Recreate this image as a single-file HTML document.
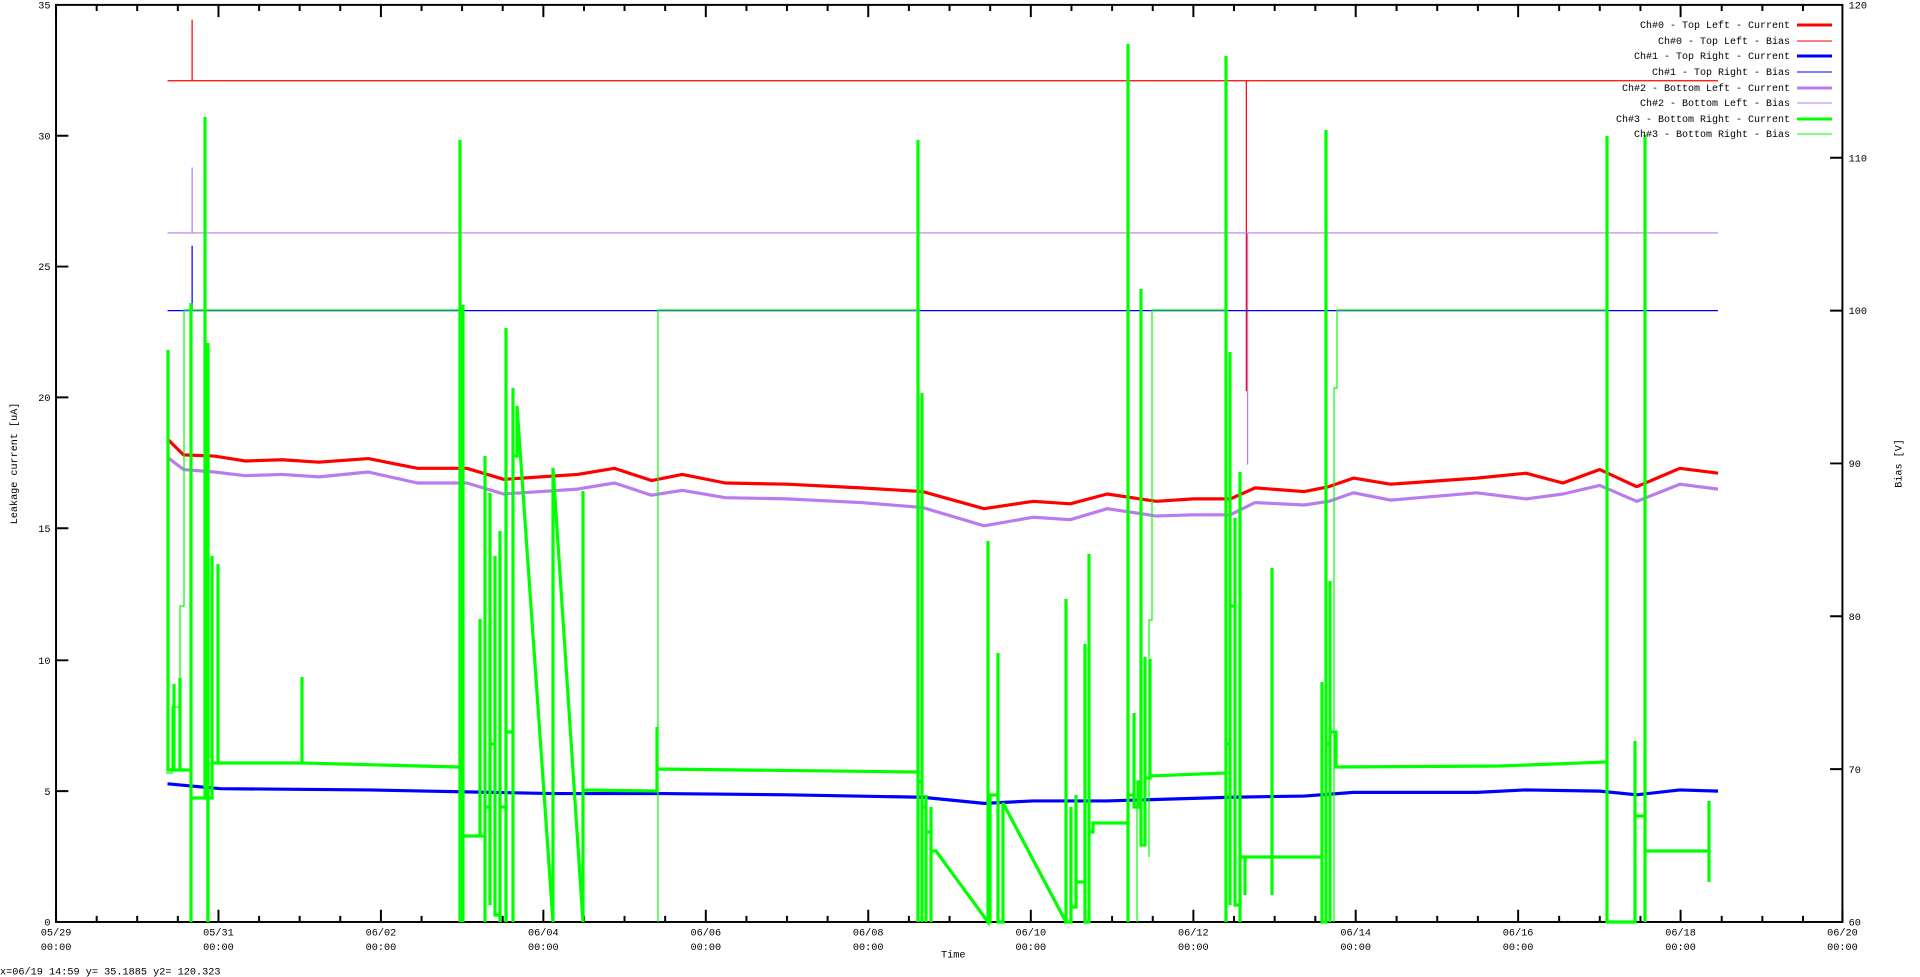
<!DOCTYPE html>
<html><head><meta charset="utf-8"><style>
html,body{margin:0;padding:0;background:#fff;width:1920px;height:977px;overflow:hidden;position:relative}
svg{display:block;position:absolute;left:0;top:0}
text{font-family:"Liberation Mono","DejaVu Sans Mono",monospace;font-size:8.3px;fill:#000}
.o text{font-size:10px}
</style></head><body>
<svg width="1920" height="977" viewBox="1 0 1559 799" preserveAspectRatio="none">
<rect x="46.5" y="4" width="1450.5" height="750" fill="none" stroke="#000" stroke-width="1.6"/>
<g stroke="#000" stroke-width="1.6">
<path d="M46.5 754v-10M178.4 754v-10M310.3 754v-10M442.2 754v-10M574.1 754v-10M706 754v-10M838 754v-10M970 754v-10M1101.8 754v-10M1233.7 754v-10M1365.6 754v-10M1497 754v-10
M46.5 4v10M178.4 4v10M310.3 4v10M442.2 4v10M574.1 4v10M706 4v10M838 4v10M970 4v10M1101.8 4v10M1233.7 4v10M1365.6 4v10"/>
<path d="M79.5 754v-5M112.4 754v-5M145.4 754v-5M211.4 754v-5M244.3 754v-5M277.3 754v-5M343.3 754v-5M376.2 754v-5M409.2 754v-5M475.2 754v-5M508.1 754v-5M541.1 754v-5M607.1 754v-5M640 754v-5M673 754v-5M739 754v-5M772 754v-5M805 754v-5M871 754v-5M904 754v-5M937 754v-5M1003 754v-5M1036 754v-5M1069 754v-5M1135 754v-5M1168 754v-5M1201 754v-5M1267 754v-5M1300 754v-5M1333 754v-5M1399 754v-5M1432 754v-5M1465 754v-5
M79.5 4v5M112.4 4v5M145.4 4v5M211.4 4v5M244.3 4v5M277.3 4v5M343.3 4v5M376.2 4v5M409.2 4v5M475.2 4v5M508.1 4v5M541.1 4v5M607.1 4v5M640 4v5M673 4v5M739 4v5M772 4v5M805 4v5M871 4v5M904 4v5M937 4v5M1003 4v5M1036 4v5M1069 4v5M1135 4v5M1168 4v5M1201 4v5M1267 4v5M1300 4v5M1333 4v5M1399 4v5M1432 4v5M1465 4v5"/>
<path d="M46.5 647h10M46.5 540h10M46.5 432h10M46.5 325h10M46.5 218h10M46.5 111h10
M1497 629h-10M1497 504h-10M1497 379h-10M1497 254h-10M1497 129h-10"/>
</g>
<g text-anchor="end">
<text x="42" y="757">0</text><text x="42" y="650">5</text><text x="42" y="543">10</text><text x="42" y="435">15</text><text x="42" y="328">20</text><text x="42" y="221">25</text><text x="42" y="114">30</text><text x="42" y="7">35</text>
</g>
<g>
<text x="1502" y="757">60</text><text x="1502" y="632">70</text><text x="1502" y="507">80</text><text x="1502" y="382">90</text><text x="1502" y="257">100</text><text x="1502" y="132">110</text><text x="1502" y="7">120</text>
</g>
<g text-anchor="middle">
<text x="46.5" y="765">05/29</text><text x="46.5" y="777">00:00</text>
<text x="178.4" y="765">05/31</text><text x="178.4" y="777">00:00</text>
<text x="310.3" y="765">06/02</text><text x="310.3" y="777">00:00</text>
<text x="442.2" y="765">06/04</text><text x="442.2" y="777">00:00</text>
<text x="574.1" y="765">06/06</text><text x="574.1" y="777">00:00</text>
<text x="706" y="765">06/08</text><text x="706" y="777">00:00</text>
<text x="838" y="765">06/10</text><text x="838" y="777">00:00</text>
<text x="970" y="765">06/12</text><text x="970" y="777">00:00</text>
<text x="1101.8" y="765">06/14</text><text x="1101.8" y="777">00:00</text>
<text x="1233.7" y="765">06/16</text><text x="1233.7" y="777">00:00</text>
<text x="1365.6" y="765">06/18</text><text x="1365.6" y="777">00:00</text>
<text x="1497" y="765">06/20</text><text x="1497" y="777">00:00</text>
<text x="775" y="783">Time</text>
<text transform="translate(15,379) rotate(-90)">Leakage current [uA]</text>
<text transform="translate(1545,379) rotate(-90)">Bias [V]</text>
</g>
<text x="1" y="797">x=06/19 14:59 y= 35.1885 y2= 120.323</text>
<g fill="none" stroke-width="1">
<path stroke="#f00" d="M137 66H1396M157 66V16M1013 66V320"/>
<path stroke="#b87cf0" d="M137 190.5H1396M157 190V137M1014 190V380"/>
<path stroke="#00f" d="M137 254H1396M157 254V201"/>
</g>
<g fill="none" stroke-width="2.6" stroke-linejoin="round">
<polyline stroke="#b87cf0" points="137,374 150,384 175,386 200,389 230,388 260,390 300,386 340,395 380,395 410,404 440,402 470,400 500,395 530,405 555,401 590,407 640,408 700,411 750,415 800,430 840,423 870,425 900,416 940,422 970,421 1000,421 1020,411 1060,413 1080,410 1100,403 1130,409 1200,403 1240,408 1270,404 1300,397 1330,410 1365,396 1396,400"/>
<polyline stroke="#f00" points="137,359 150,372 175,373 200,377 230,376 260,378 300,375 340,383 380,383 410,392 440,390 470,388 500,383 530,393 555,388 590,395 640,396 700,399 750,402 800,416 840,410 870,412 900,404 940,410 970,408 1000,408 1020,399 1060,402 1080,398 1100,391 1130,396 1200,391 1240,387 1270,395 1300,384 1330,398 1365,383 1396,387"/>
<polyline stroke="#00f" points="137,641 180,645 300,646 400,648 450,649 540,649 640,650 750,652 800,657 840,655 900,655 1000,652 1060,651 1100,648 1200,648 1240,646 1300,647 1330,650 1365,646 1396,647"/>
</g>
</svg>
<svg class="o" width="1920" height="977" viewBox="0 0 1920 977">
<g fill="none" stroke="#0f0">
<path stroke-width="1.2" d="M166 773H172V707H180V606H184V310H460V922M207 922V798M658 922V310H918M1137 922V807M1149 857V620H1152V310H1226M1334 922V388H1337V310H1607V922"/>
<path stroke-width="3.2" stroke-linejoin="miter" d="M168 770V350V770H174V684V770H180V678V770H191V303V922V798H205V117V798H208V343V922V798H212V556V763H218V564V763H302V677V763L458 767H460V140V922V556H463V305V922V836H480V619V836H485V456V922V807H490V493V905V744H495V556V915H500V531V922V807H506V328V922V732H513V388V922V456H517V406L553 922V468L583 922V491V790L657 791V727V769L918 772V140V922V782H922V393V922V807H926V795V922V832H931V807V922V851H936L988 922V541V922H990V795H998V653V922H1003V803L1066 922V599V922H1071V807V907H1076V795V882H1085V644V922H1089V554V832H1093V823L1128 823V44V922V795H1134V713V807H1138V782H1141V289V845H1145V657V778H1150V659V776L1226 773V56V922V744H1230V352V905V606H1235V518V905H1240V472V922V857H1245V895V857L1272 857V568V895V857L1322 857V682V922H1326V130V922V744H1330V581V922V732H1336V767L1500 766L1607 762V136V922H1635V741V816H1645V135V922V851H1709V801V882"/>
</g>
<g text-anchor="end">
<text x="1790" y="28">Ch#0 - Top Left - Current</text>
<text x="1790" y="44">Ch#0 - Top Left - Bias</text>
<text x="1790" y="59">Ch#1 - Top Right - Current</text>
<text x="1790" y="75">Ch#1 - Top Right - Bias</text>
<text x="1790" y="91">Ch#2 - Bottom Left - Current</text>
<text x="1790" y="106">Ch#2 - Bottom Left - Bias</text>
<text x="1790" y="122">Ch#3 - Bottom Right - Current</text>
<text x="1790" y="137">Ch#3 - Bottom Right - Bias</text>
</g>
<g fill="none">
<path stroke="#f00" stroke-width="3" d="M1797 25H1832"/>
<path stroke="#f00" stroke-width="1" d="M1797 41H1832"/>
<path stroke="#00f" stroke-width="3" d="M1797 56H1832"/>
<path stroke="#00f" stroke-width="1" d="M1797 72H1832"/>
<path stroke="#b87cf0" stroke-width="3" d="M1797 88H1832"/>
<path stroke="#b87cf0" stroke-width="1" d="M1797 103H1832"/>
<path stroke="#0f0" stroke-width="3" d="M1797 119H1832"/>
<path stroke="#0f0" stroke-width="1" d="M1797 134H1832"/>
</g>
</svg>
</body></html>
